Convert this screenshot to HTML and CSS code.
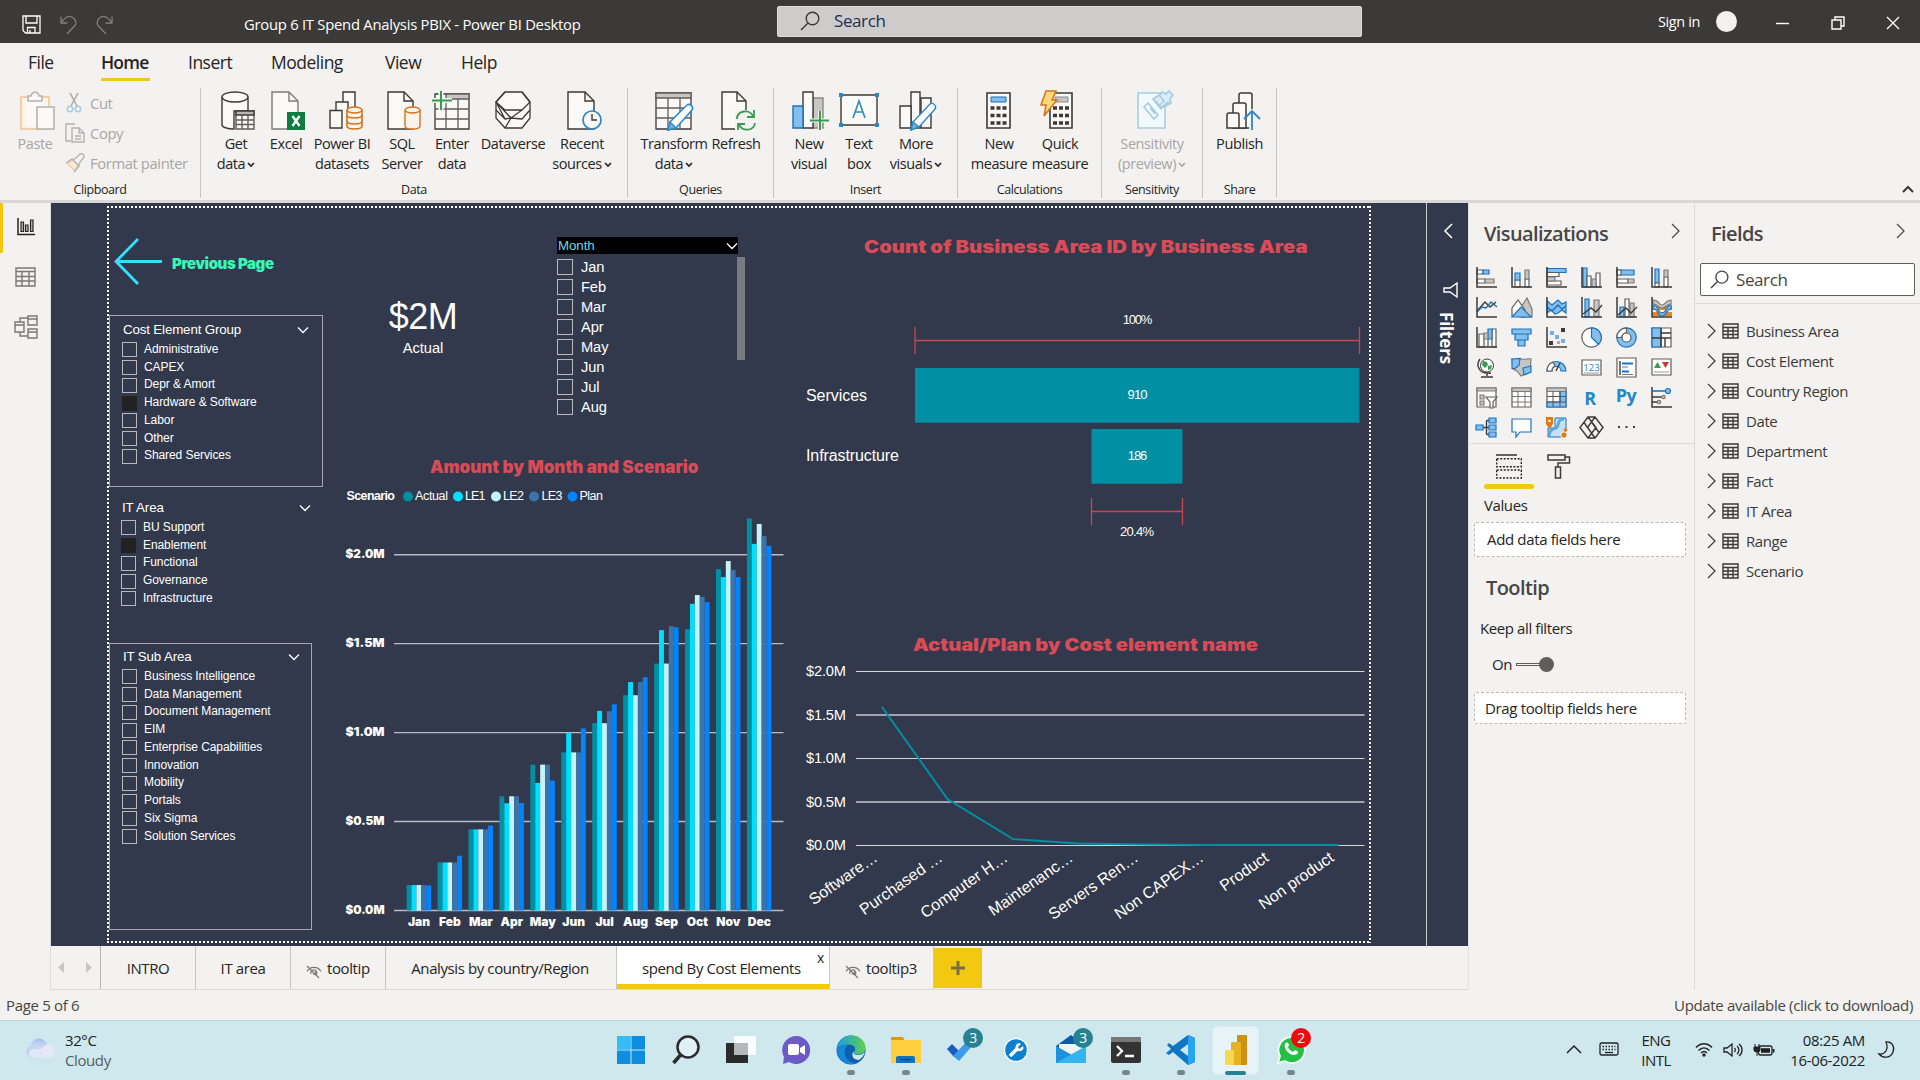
FILE: index.html
```html
<!DOCTYPE html>
<html lang="en">
<head>
<meta charset="utf-8">
<title>Group 6 IT Spend Analysis PBIX - Power BI Desktop</title>
<link rel="stylesheet" href="styles.css">
</head>
<body>
<svg class="defs" width="0" height="0">
  <defs>
    <symbol id="table" viewBox="0 0 17 16"><path d="M1 1h15v14H1zM1 4.500h15M1 8h15M1 11.500h15M6 4v11M11 4v11" fill="none" stroke="#3b3a39" stroke-width="1.400"/></symbol>
    <symbol id="chev-r" viewBox="0 0 9 16"><path d="M1 1l7 7-7 7" fill="none" stroke="currentColor" stroke-width="1.200"/></symbol>
    <symbol id="chev-d" viewBox="0 0 12 8"><path d="M1 1.500l5 5 5-5" fill="none" stroke="currentColor" stroke-width="1.300"/></symbol>
    <symbol id="mini-d" viewBox="0 0 8 6"><path d="M1 1l3 3 3-3" fill="none" stroke="currentColor" stroke-width="1.700"/></symbol>
    <symbol id="eye-off" viewBox="0 0 16 14"><path d="M1 6.500C4 1 12 1 15 6.500M5 9a3 3 0 1 1 5 1M1 1l12 12M7 8.500a1.500 1.500 0 1 0 2-2" fill="none" stroke="#7a7876" stroke-width="1.100"/></symbol>
    <symbol id="glass" viewBox="0 0 20 20"><circle cx="12.500" cy="7.500" r="6.300" fill="none" stroke="currentColor" stroke-width="1.400"/><path d="M8 12l-7 7" stroke="currentColor" stroke-width="1.500"/></symbol>
  </defs>
</svg>

<header class="titlebar">
  <div class="quick">
    <svg width="19" height="19" viewBox="0 0 19 19" fill="none" stroke="#fff" stroke-width="1.300"><path d="M1 1h17v17H3.500L1 15.500zM4 1v7h11V1M5.500 18v-5.500h7.500V18M8 15v3"/></svg>
    <svg width="17" height="20" viewBox="0 0 17 20" fill="none" stroke="#83817f" stroke-width="1.300"><path d="M1 1.500V8h6.500M1 8C5 2 9 .500 12 2c4 2.500 5 6 2.500 9L7 19"/></svg>
    <svg width="17" height="20" viewBox="0 0 17 20" fill="none" stroke="#83817f" stroke-width="1.300"><path d="M16 1.500V8H9.500M16 8C12 2 8 .500 5 2 1 4.500 0 8 2.500 11L10 19"/></svg>
  </div>
  <div class="doc-title">Group 6 IT Spend Analysis PBIX - Power BI Desktop</div>
  <div class="top-search"><svg width="20" height="20"><use href="#glass"/></svg><span>Search</span></div>
  <div class="signin">Sign in</div>
  <div class="avatar"></div>
  <div class="win-btns">
    <svg width="14" height="14" stroke="#fff" stroke-width="1.400"><path d="M0 7.500h13"/></svg>
    <svg width="14" height="14" fill="none" stroke="#fff" stroke-width="1.400"><path d="M1 4h9v9H1zM4 4V1h9v9h-3"/></svg>
    <svg width="14" height="14" stroke="#fff" stroke-width="1.300"><path d="M1 1l12 12M13 1L1 13"/></svg>
  </div>
</header>

<nav class="menu">
  <span class="m-file">File</span><span class="m-home">Home</span><span class="m-insert">Insert</span><span class="m-model">Modeling</span><span class="m-view">View</span><span class="m-help">Help</span>
</nav>

<section class="ribbon">
  <div class="group g-clip">
    <div class="items">
      <div class="cmd w-paste dim">
        <svg class="nudge" width="36" height="40" fill="none" stroke-width="1.600"><path d="M1 6h28v32H1z" fill="#fdf3e2" stroke="#f0cfa8" stroke-width="2"/><path d="M5 10h20v25H5z" fill="#faf9f8"/><path d="M8 10V5h3c1-5 7-5 8 0h3v5z" stroke="#b5b3b1" fill="#faf9f8"/><path d="M17 16h17v22H17z" fill="#faf9f8" stroke="#b5b3b1"/></svg>
        <span>Paste</span>
      </div>
      <div class="clip-list">
        <div><svg width="20" height="20" fill="none" stroke-width="1.500"><path d="M5 0l7 13M13 0L6 13" stroke="#aaa8a6"/><circle cx="5" cy="16" r="2.700" stroke="#a8cbe4"/><circle cx="13" cy="16" r="2.700" stroke="#a8cbe4"/></svg><span>Cut</span></div>
        <div><svg width="20" height="20" fill="none" stroke="#b5b3b1" stroke-width="1.400"><path d="M6 18H1V1h9M7 5h7l5 5v9H7zM14 5v5h5M10 13h6M10 16h6"/></svg><span>Copy</span></div>
        <div><svg width="20" height="20" fill="none" stroke="#b5b3b1" stroke-width="1.400"><path d="M2 10l8 8 3-6-5-5z" fill="#fde9cf" stroke="#f0cfa8"/><path d="M1 10l6-4 7 7-5 6M8 7l3-2 4-4c2-1 5 1 4 3l-4 5-1 3"/></svg><span>Format painter</span></div>
      </div>
    </div>
    <div class="glabel">Clipboard</div>
  </div>

  <div class="group g-data">
    <div class="items">
      <div class="cmd w-get"><svg class="nudge" width="36" height="40" viewBox="0 0 36 40" fill="none" stroke="#3b3a39" stroke-width="1.400"><path d="M1 6v28c0 2 5 4 12 4V20h14V6" fill="#faf9f8"/><ellipse cx="14" cy="6" rx="13" ry="5" fill="#faf9f8"/><path d="M15 20h18v18H15z" fill="#faf9f8" stroke="#605e5c"/><path d="M15 20h18v4H15z" fill="#b9b7b5"/><path d="M15 29h18M15 33.500h18M21 24v14M27 24v14" stroke="#605e5c"/></svg><span>Get<br>data<svg class="mini" width="8" height="6"><use href="#mini-d"/></svg></span></div>
      <div class="cmd w-excel"><svg class="nudge" width="36" height="40" viewBox="0 0 36 40" fill="none"><path d="M1 1h17l9 9v28H1z" fill="#faf9f8" stroke="#7d7b79" stroke-width="1.400"/><path d="M18 1v9h9" stroke="#7d7b79" stroke-width="1.400"/><path d="M16 21h18v18H16z" fill="#107c41"/><path d="M21.500 25l7 10M28.500 25l-7 10" stroke="#fff" stroke-width="2.300"/></svg><span>Excel</span></div>
      <div class="cmd w-pbi"><svg class="nudge2" width="36" height="40" fill="none" stroke="#3b3a39" stroke-width="1.400"><path d="M14 37V1h12v36" fill="#faf9f8"/><path d="M7 37V11h12v26" fill="#faf9f8"/><path d="M1 19.500h12V37H1z" fill="#faf9f8"/><g stroke="#d4731a" fill="#fbf3ea" stroke-width="1.600"><path d="M18 19v16c0 4 15 4 15 0V19"/><ellipse cx="25.500" cy="19" rx="7.500" ry="3"/><path d="M18 24c0 4 15 4 15 0M18 30c0 4 15 4 15 0" fill="none"/></g></svg><span>Power BI<br>datasets</span></div>
      <div class="cmd w-sql"><svg class="nudge" width="36" height="40" viewBox="0 0 36 40" fill="none" stroke="#3b3a39" stroke-width="1.400"><path d="M1 1h16l9 9v28H1z" fill="#faf9f8"/><path d="M17 1v9h9"/><path d="M18 19v16c0 4 15 4 15 0V19" stroke="#d4731a" fill="#fbf3ea"/><ellipse cx="25.500" cy="19" rx="7.500" ry="3" stroke="#d4731a" fill="#fbf3ea"/></svg><span>SQL<br>Server</span></div>
      <div class="cmd w-enter"><svg width="38" height="40" fill="none" stroke="#605e5c" stroke-width="1.300"><path d="M2 3h34v35H2z" fill="#faf9f8" stroke="#3b3a39"/><path d="M13 3h23v5H13z" fill="#c8c6c4"/><path d="M2 18h34M2 28h34M13 8v30M25 8v30"/><path d="M-1 9.500h20M8 -1v20" stroke="#f3f2f1" stroke-width="5"/><path d="M-1 9.500h20M8 0v19" stroke="#3a9b4f" stroke-width="2"/></svg><span>Enter<br>data</span></div>
      <div class="cmd w-dv"><svg width="36" height="40" fill="none" stroke="#3b3a39" stroke-width="1.300"><path d="M10 1h17l8 10v16l-8 10H10L1 27V11z" fill="#faf9f8"/><path d="M10 1L1 11l9 8h17l8-8M35 11L27 1M1 11l15 16 11-8M1 19l9 9 6-1M16 27l11 1 8-9M16 27L10 37M1 11l9 17"/></svg><span>Dataverse</span></div>
      <div class="cmd w-recent"><svg class="nudge" width="36" height="40" viewBox="0 0 36 40" fill="none" stroke="#3b3a39" stroke-width="1.400"><path d="M1 1h17l9 9v28H1z" fill="#faf9f8"/><path d="M18 1v9h9"/><circle cx="25" cy="29" r="9" fill="#faf9f8" stroke="#2b88c8" stroke-width="1.700"/><path d="M25 23v6h5"/></svg><span>Recent<br>sources<svg class="mini" width="8" height="6"><use href="#mini-d"/></svg></span></div>
    </div>
    <div class="glabel">Data</div>
  </div>

  <div class="group g-query">
    <div class="items">
      <div class="cmd w-trans"><svg width="38" height="40" fill="none" stroke="#605e5c" stroke-width="1.300"><path d="M1 2h35v36H1z" fill="#faf9f8" stroke="#3b3a39"/><path d="M1 2h35v5H1z" fill="#c8c6c4"/><path d="M1 17h35M1 27h35M13 7v31M25 7v31"/><path d="M13 39l2-8 17-17c3-2 7 2 5 5L21 37z" fill="#fff" stroke="#2b88c8" stroke-width="1.500"/><path d="M13 39l2-8 6 6z" fill="#71afe5" stroke="#2b88c8"/></svg><span>Transform<br>data<svg class="mini" width="8" height="6"><use href="#mini-d"/></svg></span></div>
      <div class="cmd w-refresh"><svg class="nudge" width="36" height="40" viewBox="0 0 36 40" fill="none" stroke="#3b3a39" stroke-width="1.400"><path d="M1 1h15l9 9v28H1z" fill="#faf9f8"/><path d="M16 1v9h9"/><path d="M14 19h20v21H14z" fill="#f3f2f1" stroke="none"/><path d="M16 28c0-9 13-10 16-3M33 19v7h-7M34 32c-1 8-12 9-16 2M17 39v-6h7" stroke="#3a9b4f" stroke-width="1.800"/></svg><span>Refresh</span></div>
    </div>
    <div class="glabel">Queries</div>
  </div>

  <div class="group g-insert">
    <div class="items">
      <div class="cmd w-nv"><svg class="nudge1" width="38" height="40" fill="none" stroke="#3b3a39" stroke-width="1.400"><path d="M21 7h10v30H21z" fill="#c8c6c4" stroke="#8a8886"/><path d="M11 1h10v36H11z" fill="#faf9f8"/><path d="M1 15h10v22H1z" fill="#83beec" stroke="#1f6fb5"/><path d="M18 29.500h20M28 20v20" stroke="#f3f2f1" stroke-width="4"/><path d="M18 29.500h19M28 20v19" stroke="#3a9b4f" stroke-width="2"/></svg><span>New<br>visual</span></div>
      <div class="cmd w-text"><svg width="40" height="40" fill="none" stroke="#3b3a39" stroke-width="1.400"><path d="M2 4h36v30H2z" fill="#faf9f8"/><path d="M14 27l6-17 6 17M16 21h8" stroke="#2b88c8" stroke-width="1.600"/><path d="M0 2h4v4H0zM36 2h4v4h-4zM0 32h4v4H0zM36 32h4v4h-4z" fill="#2b88c8" stroke="none"/></svg><span>Text<br>box</span></div>
      <div class="cmd w-more"><svg class="nudge1" width="38" height="40" fill="none" stroke="#3b3a39" stroke-width="1.400"><path d="M22 7h10v30H22z" fill="#faf9f8"/><path d="M12 1h9v36h-9z" fill="#faf9f8"/><path d="M1 15h11v22H1z" fill="#faf9f8"/><path d="M12 39l2-8 17-18c3-2 7 2 5 5L20 36z" fill="#fff" stroke="#2b88c8"/><path d="M12 39l2-8 6 5z" fill="#71afe5" stroke="#2b88c8"/></svg><span>More<br>visuals<svg class="mini" width="8" height="6"><use href="#mini-d"/></svg></span></div>
    </div>
    <div class="glabel">Insert</div>
  </div>

  <div class="group g-calc">
    <div class="items">
      <div class="cmd w-nm"><svg width="28" height="40" fill="none"><path d="M2 2h23v35H2z" fill="#faf9f8" stroke="#3b3a39" stroke-width="1.600"/><path d="M6 6h15v5H6z" fill="#83beec" stroke="#1f6fb5"/><path d="M5.500 17h16M5.500 24.500h16M5.500 32h16" stroke="#3b3a39" stroke-width="3.600" stroke-dasharray="4 2"/></svg><span>New<br>measure</span></div>
      <div class="cmd w-qm"><svg class="nudge-l" width="36" height="40" fill="none"><path d="M10 2h22v35H10z" fill="#faf9f8" stroke="#3b3a39" stroke-width="1.600"/><path d="M15 6h13v5H15z" fill="#c8c6c4" stroke="#8a8886"/><path d="M13 17h16M13 24.500h16M13 32h16" stroke="#3b3a39" stroke-width="3.600" stroke-dasharray="4 2"/><path d="M6 0h10l-4 9h5L4 25l2-11H1z" fill="#ffd67a" stroke="#d4731a" stroke-width="1.500"/></svg><span>Quick<br>measure</span></div>
    </div>
    <div class="glabel">Calculations</div>
  </div>

  <div class="group g-sens">
    <div class="items">
      <div class="cmd w-sens dim"><svg class="nudge" width="36" height="40" fill="none" stroke="#a6cde4" stroke-width="1.600"><path d="M1 2h27v35H1z" fill="#f3f8fb"/><path d="M11 12l10 12-4 4L7 16zM13 17l5 6"/><path d="M16 8l6-4 5 6-5 5zM22 5l3-4 4 2 3-3 4 4-3 4 1 4-5 3" fill="#dcecf5"/><path d="M18 10l6 7 8-6" stroke-width="2.500"/></svg><span>Sensitivity<br>(preview)<svg class="mini" width="8" height="6"><use href="#mini-d"/></svg></span></div>
    </div>
    <div class="glabel">Sensitivity</div>
  </div>

  <div class="group g-share">
    <div class="items">
      <div class="cmd w-pub"><svg class="nudge" width="34" height="40" fill="none" stroke="#3b3a39" stroke-width="1.500"><path d="M13 37V4q0-2 2-2h9q2 0 2 2v33z" fill="#faf9f8"/><path d="M7 37V14q0-2 2-2h9q2 0 2 2v23z" fill="#faf9f8"/><path d="M1 37V24q0-2 2-2h8q2 0 2 2v13z" fill="#faf9f8"/><path d="M26 18v22" stroke="#f3f2f1" stroke-width="6"/><path d="M26 39V20M18 28l8-8 8 8" stroke="#2b88c8" stroke-width="1.800"/></svg><span>Publish</span></div>
    </div>
    <div class="glabel">Share</div>
  </div>
  <svg class="collapse" width="12" height="8" fill="none" stroke="#3b3a39" stroke-width="2"><path d="M1 7l5-5 5 5"/></svg>
</section>

<main class="workspace">
  <aside class="rail">
    <div class="rail-item on"><svg width="18" height="18" fill="none" stroke="#252423" stroke-width="1.500"><path d="M1 0v16.500h17"/><path d="M4 4h2.500v9.500H4zM8.500 7H11v6.500H8.500zM13.500 2H16v11.500h-2.500z" fill="#bbb" stroke-width="1.200"/></svg></div>
    <div class="rail-item"><svg width="21" height="20" fill="none" stroke="#7a7876" stroke-width="1.400"><path d="M1 1h19v18H1zM1 4.500h19M1 9.500h19M1 14h19M7 4v15M14 4v15"/></svg></div>
    <div class="rail-item"><svg width="24" height="24" fill="none" stroke="#7a7876" stroke-width="1.400"><path d="M14 1h9v9h-9zM14 4h9M1 7h9v10H1zM1 10h9M14 14h9v9h-9zM14 17h9M6 7V3h8M6 17v4h8"/></svg></div>
  </aside>

  <div class="center">
    <div class="stage">
      <div class="canvas-area">
        <div class="report">
          <div class="prev">
            <svg width="48" height="48" fill="none" stroke="#32e0ff" stroke-width="2.800"><path d="M24 1L2 23.500 24 46M2 23.500h46"/></svg>
            <svg width="104" height="22"><text class="black prev-t" x="0" y="18" textLength="102">Previous Page</text></svg>
          </div>

          <div class="slicer s1 boxed">
            <div class="s-head"><span>Cost Element Group</span><svg width="12" height="8"><use href="#chev-d"/></svg></div>
            <ul><li>Administrative</li><li>CAPEX</li><li>Depr &amp; Amort</li><li class="on">Hardware &amp; Software</li><li>Labor</li><li>Other</li><li>Shared Services</li></ul>
          </div>
          <div class="slicer s2">
            <div class="s-head"><span>IT Area</span><svg width="12" height="8"><use href="#chev-d"/></svg></div>
            <ul><li>BU Support</li><li class="on">Enablement</li><li>Functional</li><li>Governance</li><li>Infrastructure</li></ul>
          </div>
          <div class="slicer s3 boxed">
            <div class="s-head"><span>IT Sub Area</span><svg width="12" height="8"><use href="#chev-d"/></svg></div>
            <ul><li>Business Intelligence</li><li>Data Management</li><li>Document Management</li><li>EIM</li><li>Enterprise Capabilities</li><li>Innovation</li><li>Mobility</li><li>Portals</li><li>Six Sigma</li><li>Solution Services</li></ul>
          </div>

          <div class="card"><div class="big">$2M</div><div class="cap">Actual</div></div>

          <div class="month">
            <div class="mo-head"><span>Month</span><svg width="12" height="8"><use href="#chev-d"/></svg></div>
            <div class="mo-body">
              <ul><li>Jan</li><li>Feb</li><li>Mar</li><li>Apr</li><li>May</li><li>Jun</li><li>Jul</li><li>Aug</li></ul>
              <div class="scroll"></div>
            </div>
          </div>

          <svg class="viz bars" viewBox="340 450 450 485" width="450" height="485">
            <text class="black red" x="430" y="473" textLength="268.500" lengthAdjust="spacingAndGlyphs">Amount by Month and Scenario</text>
            <g class="legend">
              <text x="346.500" y="500" textLength="48.500" class="b">Scenario</text>
              <circle cx="408" cy="496.500" r="5" fill="#018fa4"/><text x="415" y="500" textLength="33">Actual</text>
              <circle cx="458" cy="496.500" r="5" fill="#00dfff"/><text x="465" y="500" textLength="20.500">LE1</text>
              <circle cx="496" cy="496.500" r="5" fill="#c3f3fb"/><text x="503" y="500" textLength="21">LE2</text>
              <circle cx="534" cy="496.500" r="5" fill="#3c73ab"/><text x="541.500" y="500" textLength="21">LE3</text>
              <circle cx="572.500" cy="496.500" r="5" fill="#0084ff"/><text x="579.500" y="500" textLength="23.500">Plan</text>
            </g>
            <g id="bar-plot"></g>
          </svg>

          <svg class="viz funnel" viewBox="800 230 565 315" width="565" height="315">
            <text class="black red" x="864" y="253" textLength="443.500" lengthAdjust="spacingAndGlyphs">Count of Business Area ID by Business Area</text>
            <g fill="none" stroke="#c9484f" stroke-width="1.300"><path d="M915 327v27M1359.500 327v27M915 340.500h444.500M1091.500 498v27M1182.500 498v27M1091.500 511.500h91"/></g>
            <path d="M915 368h444.500v54.700H915zM1091.500 429h91v54.800h-91z" fill="#018fa4"/>
            <g class="num"><text x="1137.500" y="324" textLength="29.500">100%</text><text x="1137.500" y="399" textLength="20">910</text><text x="1137.500" y="460" textLength="19.500">186</text><text x="1137" y="536" textLength="34">20.4%</text></g>
            <g class="cat"><text x="806" y="400.500" textLength="61">Services</text><text x="806" y="460.500" textLength="93">Infrastructure</text></g>
          </svg>

          <svg class="viz line" viewBox="800 630 570 300" width="570" height="300">
            <text class="black red" x="913" y="651" textLength="345" lengthAdjust="spacingAndGlyphs">Actual/Plan by Cost element name</text>
            <g stroke="#d3d5da"><path d="M856 671.500h508.500M856 758.500h508.500M856 845.500h508.500" stroke-width="1.200"/><path d="M856 715h508.500M856 802h508.500" stroke="#a0a4ae" stroke-width="2"/></g>
            <g class="axis"><text x="806" y="676" textLength="40">$2.0M</text><text x="806" y="719.500" textLength="40">$1.5M</text><text x="806" y="763" textLength="40">$1.0M</text><text x="806" y="806.500" textLength="40">$0.5M</text><text x="806" y="850" textLength="40">$0.0M</text></g>
            <path d="M882 707l65.500 92 65.500 40 65 4.500 65 1 65 .5h130.500" fill="none" stroke="#018fa4" stroke-width="2"/>
            <g class="tilt" id="tilt"></g>
          </svg>
        </div>
      </div>
      <aside class="filters">
        <svg class="f-chev" width="9" height="16" fill="none" stroke="#fff" stroke-width="1.500"><path d="M8 1L1 8l7 7"/></svg>
        <svg class="f-fun" width="16" height="16" fill="none" stroke="#fff" stroke-width="1.400"><path d="M14 1v14L7 10H1V6h6z"/></svg>
        <span>Filters</span>
      </aside>
    </div>
    <div class="tabs">
      <div class="t-nav"><svg width="6" height="11"><path d="M6 0v11L0 5.500z" fill="#c8c6c4"/></svg><svg width="6" height="11"><path d="M0 0v11l6-5.500z" fill="#c8c6c4"/></svg></div>
      <div class="tab t1">INTRO</div>
      <div class="tab t2">IT area</div>
      <div class="tab t3"><svg width="16" height="14"><use href="#eye-off"/></svg>tooltip</div>
      <div class="tab t4">Analysis by country/Region</div>
      <div class="tab t5">spend By Cost Elements<span class="close">x</span></div>
      <div class="tab t6"><svg width="16" height="14"><use href="#eye-off"/></svg>tooltip3</div>
      <div class="plus"><svg width="14" height="14" stroke="#7a6f45" stroke-width="3"><path d="M0 7h14M7 0v14"/></svg></div>
    </div>
  </div>

  <aside class="vis-pane">
    <div class="pane-head"><h2 class="vt">Visualizations</h2><svg width="9" height="16"><use href="#chev-r"/></svg></div>
    <div class="vgrid">
      <svg viewBox="0 0 21 21"><path d="M1 3h6v4H1z" class="w"/><path d="M7 3h6v4H7z" class="u"/><path d="M1 12h8v4H1z" class="w"/><path d="M9 12h9v4H9z" class="g"/><path class="ax" d="M1 0v20h20"/></svg>
      <svg viewBox="0 0 21 21"><path d="M4 13h5v7H4z" class="w"/><path d="M4 6h5v7H4z" class="u"/><path d="M14 12h4v8h-4z" class="w"/><path d="M14 3h4v9h-4z" class="g"/><path class="ax" d="M1 0v20h20"/></svg>
      <svg viewBox="0 0 21 21"><path d="M1 1.500h19v4H1z" class="u"/><path d="M1 5.500h12v4H1zM1 14h14v4H1z" class="w"/><path d="M1 10h8v4H1z" class="g"/><path class="ax" d="M1 0v20h20"/></svg>
      <svg viewBox="0 0 21 21"><path d="M2 1h4v19H2z" class="u"/><path d="M6 9h4v11H6zM15 6h4v14h-4z" class="w"/><path d="M11 12h4v8h-4z" class="g"/><path class="ax" d="M1 0v20h20"/></svg>
      <svg viewBox="0 0 21 21"><path d="M1 3h17v5H1z" class="u"/><path d="M1 3h4v5H1zM1 12h11v4H1z" class="w"/><path d="M12 12h6v4h-6z" class="g"/><path class="ax" d="M1 0v20h20"/></svg>
      <svg viewBox="0 0 21 21"><path d="M4 2h4v14H4z" class="u"/><path d="M4 16h4v4H4zM13 10h4v10h-4z" class="w"/><path d="M13 3h4v7h-4z" class="g"/><path class="ax" d="M1 0v20h20"/></svg>

      <svg viewBox="0 0 21 21"><path d="M1 14L9 5l5 5 6-5" class="n"/><path d="M1 15l5-5 4 1 5-6 6 5" class="n bl"/><path class="ax" d="M1 0v20h20"/></svg>
      <svg viewBox="0 0 21 21"><path d="M10 10l6-9 5 11v8H10z" class="g"/><path d="M1 19V11l6-8 7 10v7z" class="w"/><path d="M1 20l9-10 10 10z" class="u"/></svg>
      <svg viewBox="0 0 21 21"><path d="M1 4l5 4 6-5 4 4 4-2v11l-4-3-4 3-3 1-4-4-4 3z" class="u"/><path d="M1 10l5 4 6-6 4 4 4-3" class="n bl"/><path class="ax" d="M1 0v20h20"/></svg>
      <svg viewBox="0 0 21 21"><path d="M4 2h4v18H4z" class="u"/><path d="M13 3h5v17h-5z" class="g"/><path d="M2 17l8-6 5 4 6-7" class="n"/><path class="ax" d="M1 0v20h20"/></svg>
      <svg viewBox="0 0 21 21"><path d="M4 10h4v10H4z" class="u"/><path d="M9 2h4v18H9z" class="w"/><path d="M14 6h4v14h-4z" class="g"/><path d="M2 18l8-7 5 5 6-6" class="n"/><path class="ax" d="M1 0v20h20"/></svg>
      <svg viewBox="0 0 21 21"><path d="M1 9h20v4H1zM1 15h20v4H1z" fill="#e8871e"/><path d="M2 3c7 0 5 5 9 5s3-5 9-5v4c-5 0-4 4-9 4S8 7 2 7z" class="g"/><path d="M2 8c6 0 4 8 9 8s4-8 9-8v4c-5 0-4 7-9 7S8 12 2 12z" class="u"/><path class="ax" d="M1 0v20h20"/></svg>

      <svg viewBox="0 0 21 21"><path d="M3 7h5v13H3zM8 8h4v12M16 2h4v18h-4z" class="w"/><path d="M12 2h4v10h-4z" class="u"/><path d="M8 6h4v6H8z" class="g"/><path class="ax" d="M1 0v20h20"/></svg>
      <svg viewBox="0 0 21 21"><path d="M1 2h19v5H1zM4 7h13v6H4zM7 13h7v6H7z" class="u"/></svg>
      <svg viewBox="0 0 21 21"><path d="M4 4h4v4H4zM9 8h4v4H9zM15 12h4v4h-4z" fill="#71afe5"/><path d="M15 1h4v4h-4zM3 14h4v4H3z" fill="#3b3a39"/><path d="M11 14h3v3h-3z" fill="#aaa"/><path class="ax" d="M1 0v20h20"/></svg>
      <svg viewBox="0 0 21 21"><circle cx="10.500" cy="10.500" r="9.700" class="w"/><path d="M10.500.800a9.700 9.700 0 0 1 7 16.500l-7-6.800z" class="u"/></svg>
      <svg viewBox="0 0 21 21"><circle cx="10.500" cy="10.500" r="9.700" class="u"/><path d="M.800 10.500A9.700 9.700 0 0 1 10.500.800v5a5 5 0 0 0-5 4.700z" class="w"/><circle cx="10.500" cy="10.500" r="4.500" class="w"/></svg>
      <svg viewBox="0 0 21 21"><path d="M1 1h19v19H1z" class="w"/><path d="M1 1h9v19H1z" class="u"/><path d="M1 11h19M14 11v9M10 6h10M10 1v19" class="n"/></svg>

      <svg viewBox="0 0 21 21"><circle cx="11" cy="8.500" r="6.500" fill="#fff" stroke="#3b3a39"/><path d="M7 4l4 1 1 3-3 3-3-3zM12 9l4-1-1 4-3 1z" fill="#3a9b4f"/><path d="M4 2c-5 7 0 14 7 14h4M11 16v3M5 20h12" class="n"/></svg>
      <svg viewBox="0 0 21 21"><path d="M1 2c4 2 6-1 10 0s6-1 9 0l-1 12-9 5-4-5-4-2z" class="g"/><path d="M1 2l8-.500-1 7-4 3H1zM12 11l8-2v6l-7 3z" class="u"/></svg>
      <svg viewBox="0 0 21 21"><path d="M1 14a9.500 9.500 0 0 1 19 0h-5a4.500 4.500 0 0 0-9 0z" class="u"/><path d="M1 14a9.500 9.500 0 0 1 6-9l2 4a5 5 0 0 0-3 5z" class="w"/><path d="M10 14l4-8" class="n"/></svg>
      <svg viewBox="0 0 21 21"><path d="M1 3h19v15H1z" class="w"/><path d="M3 16h15" stroke="#999"/><text x="10.500" y="14" class="i123">123</text></svg>
      <svg viewBox="0 0 21 21"><path d="M1 1h19v19H1z" class="w"/><path d="M4 4v14" class="n"/><path d="M6 6.500h11M6 14.500h7" stroke="#1a73c0" stroke-width="2.200"/><path d="M6 10h6M6 17.500h11" stroke="#777"/></svg>
      <svg viewBox="0 0 21 21"><path d="M1 2h19v16H1z" class="w"/><path d="M3 11l3.500-6L10 11z" fill="#3a9b4f"/><path d="M11 5h7l-3.500 6z" fill="#d13438"/><path d="M3 15h15" stroke="#999"/></svg>

      <svg viewBox="0 0 21 21"><path d="M1 1h19v19H1z" class="w"/><path d="M1 1h19v3H1z" class="g"/><path d="M4 8h4v4H4zM4 14h4v4H4z" class="g"/><path d="M10 10h11l-4 5v6h-3v-6z" class="w"/></svg>
      <svg viewBox="0 0 21 21"><path d="M1 1h19v19H1z" class="w"/><path d="M1 1h19v3.500H1z" class="g"/><path d="M1 9.500h19M1 15h19M7 4v16M14 4v16" stroke="#777"/></svg>
      <svg viewBox="0 0 21 21"><path d="M1 1h19v19H1z" class="w"/><path d="M14 4h6v16H1v-5h13z" class="u"/><path d="M1 1h19v3.500H1z" class="g"/><path d="M1 9.500h19M1 15h19M7 4v16M14 4v16" stroke="#555"/></svg>
      <svg viewBox="0 0 21 21"><text x="9" y="17.500" class="ir">R</text></svg>
      <svg viewBox="0 0 21 21"><text x="10" y="15" class="ir">Py</text></svg>
      <svg viewBox="0 0 21 21"><path class="ax" d="M1 0v20h20"/><path d="M1 4h14" stroke="#1a73c0" stroke-width="1.600"/><circle cx="17" cy="4" r="2.500" class="u"/><path d="M1 10h10M1 15h5" class="n"/><circle cx="12.500" cy="10" r="1.700" class="g"/><circle cx="8" cy="15" r="1.700" class="g"/></svg>

      <svg viewBox="0 0 21 21"><path d="M7 10.500h6M10.500 3.500v14M10.500 3.500H13M10.500 17.500H13" class="n"/><path d="M0 8h7v5H0zM13 1h7v5h-7zM13 8h7v5h-7zM13 15h7v5h-7z" class="u"/></svg>
      <svg viewBox="0 0 21 21"><path d="M1 2h19v13H9l-4 5v-5H1z" class="w bl"/></svg>
      <svg viewBox="0 0 21 21"><path d="M9 1h11v12l-3 7H2v-9h7z" fill="#c3e0f5" stroke="#1a73c0"/><path d="M18 2c-8 0-4 7-8 9s-6 1-7 8" stroke="#5ba7e0" stroke-width="3" fill="none"/><path d="M0 0h7v7l-3.500 5L0 7z" fill="#e07a10"/><circle cx="3.500" cy="4" r="1.300" fill="#fff"/><circle cx="18" cy="18" r="3.200" fill="#e07a10" stroke="#fff"/><circle cx="19.500" cy="13" r="1.800" fill="#e07a10"/></svg>
      <svg viewBox="0 0 21 21"><path d="M7 0h7l8 10.500L14 21H7L-1 10.500zM7 0l8 10.500L7 21M14 0L6.500 10.500 14 21M10.500 5L18 15.500M10.500 16L3 5.500" class="n"/></svg>
      <svg viewBox="0 0 21 21"><path d="M2 9h2v2H2zM9.500 9h2v2h-2zM17 9h2v2h-2z" fill="#3b3a39"/></svg>
    </div>
    <div class="well-tabs">
      <svg width="26" height="25" fill="none" stroke="#252423" stroke-width="1.400"><path d="M0 1h21"/><path d="M.700 4.700h24.600v8H.700zM.700 16h24.600v8H.700z" stroke-dasharray="2 1.500"/></svg>
      <svg width="24" height="25" fill="none" stroke="#3b3a39" stroke-width="1.500"><path d="M1 1h17v5H1zM18 3h4.500v6H11v4M8.500 13h5v11h-5z"/></svg>
    </div>
    <div class="underline"></div>
    <div class="lbl-values">Values</div>
    <div class="drop d1">Add data fields here</div>
    <h2 class="tt">Tooltip</h2>
    <div class="keep">Keep all filters</div>
    <div class="toggle"><span>On</span><i></i><b></b></div>
    <div class="drop d2">Drag tooltip fields here</div>
  </aside>

  <aside class="fields-pane">
    <div class="pane-head"><h2>Fields</h2><svg width="9" height="16"><use href="#chev-r"/></svg></div>
    <div class="f-search"><svg width="19" height="19"><use href="#glass"/></svg><span>Search</span></div>
    <ul class="f-list">
      <li><svg width="9" height="16"><use href="#chev-r"/></svg><svg width="17" height="16"><use href="#table"/></svg>Business Area</li>
      <li><svg width="9" height="16"><use href="#chev-r"/></svg><svg width="17" height="16"><use href="#table"/></svg>Cost Element</li>
      <li><svg width="9" height="16"><use href="#chev-r"/></svg><svg width="17" height="16"><use href="#table"/></svg>Country Region</li>
      <li><svg width="9" height="16"><use href="#chev-r"/></svg><svg width="17" height="16"><use href="#table"/></svg>Date</li>
      <li><svg width="9" height="16"><use href="#chev-r"/></svg><svg width="17" height="16"><use href="#table"/></svg>Department</li>
      <li><svg width="9" height="16"><use href="#chev-r"/></svg><svg width="17" height="16"><use href="#table"/></svg>Fact</li>
      <li><svg width="9" height="16"><use href="#chev-r"/></svg><svg width="17" height="16"><use href="#table"/></svg>IT Area</li>
      <li><svg width="9" height="16"><use href="#chev-r"/></svg><svg width="17" height="16"><use href="#table"/></svg>Range</li>
      <li><svg width="9" height="16"><use href="#chev-r"/></svg><svg width="17" height="16"><use href="#table"/></svg>Scenario</li>
    </ul>
  </aside>
</main>

<footer class="status"><span class="pg">Page 5 of 6</span><span class="upd">Update available (click to download)</span></footer>

<div class="taskbar">
  <div class="weather">
    <svg width="32" height="22"><defs><linearGradient id="cl" x1="0" y1="0" x2="0" y2="1"><stop offset="0" stop-color="#a9c0ee"/><stop offset="1" stop-color="#eaf0fa"/></linearGradient></defs><circle cx="14" cy="9" r="8.500" fill="url(#cl)"/><circle cx="7" cy="14" r="6" fill="#c6d4f0"/><rect x="4" y="11" width="26" height="9" rx="4.500" fill="#dfe7f5"/><circle cx="23" cy="13" r="6.500" fill="#e3e9f6"/></svg>
    <div><div class="temp">32°C</div><div class="sky">Cloudy</div></div>
  </div>
  <div class="apps">
    <div class="app"><svg width="30" height="30"><path d="M1 1h13.500v13.500H1zM15.500 1H29v13.500H15.500zM1 15.500h13.500V29H1zM15.500 15.500H29V29H15.500z" fill="#0f8de0"/><path d="M1 1h13.500v13.500H1z" fill="#35bdf5"/></svg></div>
    <div class="app"><svg width="30" height="30" fill="none"><circle cx="17" cy="12" r="10.500" stroke="#2b2b2b" stroke-width="2.500" fill="#dff1f6"/><path d="M9.500 20l-7 8" stroke="#2b2b2b" stroke-width="3.500"/></svg></div>
    <div class="app"><svg width="30" height="30"><path d="M0 8h22v20H0z" fill="#2b2b2b"/><path d="M8 1h22v19H8z" fill="#fff" opacity=".85"/><path d="M8 8h14v12H8z" fill="#b5b8ba"/></svg></div>
    <div class="app"><svg width="30" height="30"><path d="M15 1a14 14 0 1 1-7 26l-6 2 1-7A14 14 0 0 1 15 1z" fill="#6a5bc7"/><rect x="7" y="9" width="11" height="11" rx="2" fill="#fff"/><path d="M19 13l5-3v10l-5-3z" fill="#fff"/></svg></div>
    <div class="app dot"><svg width="32" height="32"><defs><linearGradient id="ed" x1="0" y1="0" x2="1" y2="0"><stop offset="0" stop-color="#1b9de2"/><stop offset="1" stop-color="#5fd04c"/></linearGradient></defs><circle cx="16" cy="16" r="14.500" fill="#0f5fb0"/><path d="M2 14C4 5 10 1.500 16 1.500c9 0 14.500 6 14.500 12 0 5-4 7-8 7-3 0-4-1-3-3 2-4-1-7-6-7-5 0-9 2-11.500 3.500z" fill="url(#ed)"/><path d="M2 15c3-4 8-5 11-4-4 3-5 10 0 15 2 2 5 3 8 3-9 4-20-3-19-14z" fill="#1788d8"/><path d="M19 17c-1 3 1 4 4 4 3 0 5-1 7-3-1 3-3 6-6 8-5 0-9-4-5-9z" fill="#cfe8ee"/></svg></div>
    <div class="app dot"><svg width="32" height="30"><path d="M1 2h12l2 4h-14z" fill="#d99a0b"/><path d="M1 5h30v23H1z" fill="#ffce3e"/><path d="M6 28v-5q0-2 2-2h15q2 0 2 2v5z" fill="#0e74c4"/><path d="M10 24.500h11" stroke="#084f8c" stroke-width="1.500"/></svg></div>
    <div class="app"><svg width="32" height="30"><path d="M2 14l5-5 7 7-5 6z" fill="#1b5bbf"/><path d="M8 21L23 5l5 5-14 16z" fill="#3f9ae8"/></svg><em>3</em></div>
    <div class="app"><svg width="30" height="30"><circle cx="15" cy="15" r="12" fill="#fff"/><circle cx="15" cy="15" r="10.800" fill="#0b7fd0"/><path d="M9 21l7-7" stroke="#fff" stroke-width="3.500"/><path d="M15 15c-2-5 2-8 5-6l-3 3 1 2 4-3c2 4-3 7-7 4z" fill="#fff"/></svg></div>
    <div class="app"><svg width="32" height="32"><path d="M1 12L16 1l15 11v17H1z" fill="#0a5ba8"/><path d="M4 10h24v8L16 24 4 18z" fill="#eef3f8"/><path d="M1 12l30 17H1z" fill="#1c91e0"/><path d="M31 12L1 29h30z" fill="#35b5f0"/></svg><em>3</em></div>
    <div class="app dot"><svg width="30" height="26"><rect width="30" height="26" rx="2" y="0" fill="#333"/><path d="M0 0h30v5H0z" fill="#777"/><path d="M6 9l5 5-5 5M14 19h9" stroke="#fff" stroke-width="2.300" fill="none"/></svg></div>
    <div class="app dot"><svg width="32" height="32"><path d="M23 1l7 3v24l-7 3L8 18l-4 3-3-2 5-4-4-4 2-2 4 3z" fill="#0f76c6"/><path d="M23 1l7 3v24l-7 3z" fill="#25a4f0"/><path d="M23 10v12l-8-6z" fill="#cfe8ee"/></svg></div>
    <div class="app active"><svg width="24" height="30"><rect x="13" y="0" width="10" height="30" rx="1" fill="#cf9210"/><rect x="7" y="7" width="10" height="23" rx="1" fill="#e8b321"/><rect x="1" y="15" width="9" height="15" rx="1" fill="#f6d751"/></svg></div>
    <div class="app dot"><svg width="28" height="30"><path d="M14 2a13 13 0 1 1-6 24l-7 2 2-7A13 13 0 0 1 14 2z" fill="#25c043" stroke="#f3fbfc" stroke-width="1.800"/><path d="M8 9c1-2 3-2 4 1l-1 2c1 3 3 4 5 5l2-2c3 1 4 3 2 4-6 4-14-5-12-10z" fill="#fff"/></svg><em class="r">2</em></div>
  </div>
  <div class="tray">
    <svg width="16" height="9" fill="none" stroke="#222" stroke-width="1.500"><path d="M1 8l7-7 7 7"/></svg>
    <svg width="20" height="15" fill="none" stroke="#222" stroke-width="1.300"><rect x="1" y="1" width="18" height="12" rx="1.500"/><path d="M3.500 4.500h13M3.500 7.500h13" stroke-dasharray="1.500 1.500"/><path d="M6 10.500h8"/></svg>
    <div class="lang">ENG<br>INTL</div>
    <svg width="18" height="15" fill="none" stroke="#222" stroke-width="1.400"><path d="M1 5.500c4.500-5 11.500-5 16 0M3.500 8.500c3.500-3.500 7.500-3.500 11 0M6 11c2-2 4-2 6 0"/><circle cx="9" cy="13" r="1" fill="#222"/></svg>
    <svg width="20" height="16" fill="none" stroke="#222" stroke-width="1.300"><path d="M1 6h3l5-4v12l-5-4H1zM11.500 6c1 1 1 3 0 4M14 4c2.500 2 2.500 6 0 8M16 2c4 3 4 9 0 12"/></svg>
    <svg width="22" height="16"><rect x="5.500" y="4" width="13.500" height="9" rx="2" fill="none" stroke="#222" stroke-width="1.300"/><path d="M8 6.200h9v4.600H8z" fill="#222"/><path d="M19.500 7h2v3.500h-2z" fill="#222"/><path d="M2 2v3M6 2v3M1 5h6v3q0 2-3 2t-3-2zM4 10v4" fill="#222" stroke="#222"/></svg>
    <div class="clock">08:25 AM<br>16-06-2022</div>
    <svg width="17" height="18" fill="none" stroke="#222" stroke-width="1.300"><path d="M8 1c6-1 9 5 7 10-2 6-10 7-14 2 6 1 10-5 7-12z"/></svg>
  </div>
</div>
<script src="charts.js"></script>
</body>
</html>
```
FILE: charts.js
```js
const NS = 'http://www.w3.org/2000/svg';
function add(parent, name, attrs, text) {
  const el = document.createElementNS(NS, name);
  for (const k in attrs) el.setAttribute(k, attrs[k]);
  if (text) el.textContent = text;
  parent.appendChild(el);
}

// Clustered columns: amount in $M for Actual, LE1, LE2, LE3 and Plan
const colors = ['#018fa4', '#00dfff', '#c3f3fb', '#3c73ab', '#0084ff'];
const months = {
  Jan: [0.143, 0.143, 0.143, 0.143, 0.141], Feb: [0.27, 0.27, 0.27, 0.27, 0.308],
  Mar: [0.456, 0.456, 0.456, 0.456, 0.477], Apr: [0.642, 0.603, 0.642, 0.642, 0.604],
  May: [0.82, 0.717, 0.82, 0.82, 0.73], Jun: [0.889, 0.999, 0.889, 0.889, 1.024],
  Jul: [1.053, 1.122, 1.053, 1.12, 1.159], Aug: [1.21, 1.284, 1.21, 1.284, 1.311],
  Sep: [1.388, 1.576, 1.388, 1.598, 1.592], Oct: [1.581, 1.724, 1.773, 1.763, 1.733],
  Nov: [1.919, 1.874, 1.964, 1.915, 1.874], Dec: [2.204, 2.061, 2.173, 2.104, 2.05]
};
const plot = document.getElementById('bar-plot');
const base = 910.5, unit = 177.9;
[2, 1.5, 1, 0.5, 0].forEach(v => {
  const y = base - v * unit;
  add(plot, 'path', { d: `M394 ${y}h389.5`, stroke: '#b9bcc4', 'stroke-width': 1.4 });
  add(plot, 'text', { x: 345.5, y: y + 3.5, class: 'black tick', textLength: 39, lengthAdjust: 'spacingAndGlyphs' }, `$${v.toFixed(1)}M`);
});
Object.entries(months).forEach(([name, vals], i) => {
  const x = 406.6 + i * 30.94;
  vals.forEach((v, j) => add(plot, 'rect', {
    x: x + j * 4.9, y: base - v * unit, width: 4.9, height: v * unit, fill: colors[j]
  }));
  add(plot, 'text', { x: x + 12.4, y: 926, class: 'black tick mid' }, name);
});

// Tilted category labels under the line chart
const tilt = document.getElementById('tilt');
['Software…', 'Purchased …', 'Computer H…', 'Maintenanc…', 'Servers Ren…', 'Non CAPEX…', 'Product', 'Non product']
  .forEach((t, i) => add(tilt, 'text', { transform: `translate(${878.5 + i * 65.2} 860) rotate(-35)` }, t));
```
FILE: styles.css
```css
* { box-sizing: border-box; }
body { margin: 0; width: 1920px; height: 1080px; overflow: hidden; background: #f3f2f1; color: #252423; font: 15px/20px "Open Sans", "Noto Sans", sans-serif; letter-spacing: -0.4px; display: flex; flex-direction: column; }
svg { display: block; flex: none; overflow: visible; }
.defs { position: absolute; }
ul { list-style: none; margin: 0; padding: 0; }
h2 { margin: 0; font-size: 20px; line-height: 26px; font-weight: 600; color: #484644; letter-spacing: -0.6px; }

.titlebar { height: 43px; flex: none; background: #3b3a38; color: #fff; display: flex; align-items: center; }
.quick { display: flex; gap: 19px; padding-left: 22px; width: 244px; padding-top: 6px; }
.doc-title { width: 533px; padding-top: 4px; font-size: 14.800px; letter-spacing: -.25px; }
.top-search { width: 585px; height: 31px; background: #cdccca; border: 1px solid #dddcda; border-radius: 2px; display: flex; align-items: center; gap: 14px; padding-left: 22px; font-size: 17px; color: #1d2c55; margin-top: -1px; }
.top-search svg { color: #3b3a38; }
.signin { margin-left: 296px; width: 58px; font-size: 14.500px; }
.avatar { width: 21px; height: 21px; border-radius: 50%; background: #f3f2f1; }
.win-btns { display: flex; gap: 41px; padding-left: 39px; padding-top: 3px; }

.menu { height: 45px; flex: none; display: flex; padding: 7px 0 0 28px; font-size: 17.500px; line-height: 24px; letter-spacing: -0.5px; }
.menu span { white-space: nowrap; }
.m-file { width: 73px; }
.m-home { font-weight: 600; border-bottom: 3px solid #f2c811; width: 49px; height: 31px; letter-spacing: -.8px; }
.m-insert { margin-left: 38px; width: 83px; }
.m-model { width: 114px; }
.m-view { width: 76px; }

.ribbon { height: 115px; flex: none; display: flex; border-bottom: 3px solid #d9d8d7; padding-bottom: 2px; }
.group { border-right: 1px solid #c8c6c4; display: flex; flex-direction: column; height: 110px; }
.items { display: flex; height: 95px; padding-top: 3px; }
.glabel { text-align: center; font-size: 12.500px; line-height: 16px; }
.cmd { display: flex; flex-direction: column; align-items: center; text-align: center; white-space: nowrap; font-size: 14.500px; }
.cmd > span { margin-top: 3px; display: block; }
.nudge { margin-left: 6px; } .nudge1 { margin-left: 3px; } .nudge2 { margin-left: 10px; } .nudge-l { margin-right: 5px; }
.dim, .clip-list { color: #a8a6a4; }
.mini { display: inline-block; margin-left: 2px; vertical-align: 1px; }
.g-clip { width: 201px; } .g-data { width: 427px; } .g-query { width: 146px; } .g-insert { width: 184px; }
.g-calc { width: 144px; } .g-sens { width: 101px; } .g-share { width: 74px; }
.g-data .items { padding-left: 10px; } .g-query .items { padding-left: 11px; } .g-insert .items { padding-left: 15px; } .g-calc .items { padding-left: 11px; }
.w-paste { width: 60px; padding-left: 10px; } .w-get, .w-excel { width: 50px; } .w-pbi { width: 62px; } .w-sql { width: 58px; } .w-enter { width: 42px; } .w-dv { width: 80px; } .w-recent { width: 58px; }
.w-trans { width: 70px; } .w-refresh { width: 54px; } .w-nv { width: 40px; } .w-text { width: 60px; } .w-more { width: 54px; }
.w-nm { width: 60px; } .w-qm { width: 62px; } .w-sens { width: 100px; } .w-pub { width: 73px; }
.clip-list { display: flex; flex-direction: column; gap: 10px; padding: 2px 0 0 5px; font-size: 14.800px; }
.clip-list div { display: flex; gap: 5px; white-space: nowrap; }
.collapse { margin: 97px 6px 0 auto; }

.workspace { height: 787px; flex: none; display: flex; }
.rail { width: 51px; border-right: 1px solid #dcdbda; }
.rail-item { height: 50px; display: flex; align-items: center; justify-content: center; border-left: 3px solid transparent; padding: 0 2px 3px 0; }
.rail-item.on { border-color: #f2c811; }
.center { width: 1417px; }
.stage { height: 743px; display: flex; background: #32394c; }
.canvas-area { width: 1375px; padding: 3px 0 0 56px; }
.report { position: relative; width: 1264px; height: 737px; background:
  repeating-linear-gradient(90deg, #fff 0 2px, transparent 2px 4px) 0 0/100% 2px no-repeat,
  repeating-linear-gradient(90deg, #fff 0 2px, transparent 2px 4px) 0 100%/100% 2px no-repeat,
  repeating-linear-gradient(#fff 0 2px, transparent 2px 4px) 0 0/2px 100% no-repeat,
  repeating-linear-gradient(#fff 0 2px, transparent 2px 4px) 100% 0/2px 100% no-repeat;
  color: #fff; font-family: "Liberation Sans", Arial, sans-serif; letter-spacing: 0; }
.report text { fill: #fff; }

/* visuals pinned on the report canvas */
.prev { position: absolute; left: 7px; top: 32px; display: flex; align-items: center; gap: 10px; }
.black { font-family: Inter, "Liberation Sans", sans-serif; font-weight: 900; }
.report .prev-t { fill: #38f8b8; font-size: 15px; }
.report .red { fill: #d94c57; font-size: 17px; }
.slicer { position: absolute; left: 2px; font-size: 12px; line-height: 17.730px; letter-spacing: -.08px; }
.boxed { border: 1px solid #a3a7b2; }
.s1 { top: 109px; width: 214px; height: 172px; padding: 5px 13px 0 12px; }
.s2 { top: 287px; width: 213px; padding: 6px 11px 0 12px; }
.s3 { top: 437px; width: 203px; height: 287px; padding: 4px 11px 0 12px; }
.s-head { display: flex; justify-content: space-between; align-items: center; font-size: 13.330px; height: 17px; margin-bottom: 3px; padding-left: 1px; letter-spacing: -.15px; }
.slicer li { display: flex; align-items: center; gap: 7px; white-space: nowrap; }
.slicer li::before, .month li::before { content: ""; width: 13px; height: 13px; border: 1px solid #b9b9bb; flex: none; }
.slicer li.on::before { background: #222; border-color: #222; }
.card { position: absolute; left: 233px; top: 91px; width: 166px; text-align: center; }
.big { font-size: 36px; line-height: 40px; letter-spacing: -.5px; }
.cap { font-size: 14.670px; line-height: 18px; margin-top: 2px; }
.month { position: absolute; left: 450px; top: 31px; width: 188px; }
.mo-head { background: #000; color: #64dcf0; width: 181px; height: 17px; display: flex; align-items: center; justify-content: space-between; padding-left: 1px; font-size: 13.330px; line-height: 16px; letter-spacing: -.1px; }
.mo-head svg { color: #fff; }
.mo-body { display: flex; justify-content: space-between; padding-top: 3px; }
.month li { display: flex; align-items: center; gap: 8px; height: 20px; font-size: 14.670px; padding-left: 0; letter-spacing: -.1px; }
.month li::before { width: 14px; height: 14px; }
.scroll { width: 8px; height: 103px; background: #7a7b80; }
.viz { position: absolute; }
.bars { left: 233px; top: 244px; }
.funnel { left: 693px; top: 24px; }
.line { left: 693px; top: 424px; }
.legend { font-size: 12.500px; }
.b { font-weight: bold; }
.tick { font-size: 12px; }
.mid, .num { text-anchor: middle; }
.num { font-size: 13px; }
.cat { font-size: 16px; }
.axis { font-size: 14.670px; }
.tilt { font-size: 16px; text-anchor: end; }

.filters { width: 42px; border-left: 1px solid #c8cad0; display: flex; flex-direction: column; align-items: center; color: #fff; }
.f-chev { margin: 20px 0 0 1px; }
.f-fun { margin: 43px 0 0 6px; }
.filters span { writing-mode: vertical-rl; font-weight: 700; font-size: 17px; margin-top: 14px; margin-right: 3px; letter-spacing: -.2px; }

.tabs { height: 44px; display: flex; border-bottom: 1px solid #dcdbda; white-space: nowrap; }
.t-nav { width: 50px; display: flex; gap: 22px; align-items: center; padding-left: 7px; border-right: 1px solid #b5b3b1; }
.tab { display: flex; align-items: center; border-right: 1px solid #c8c6c4; position: relative; letter-spacing: -.4px; }
.t1, .t2 { width: 95px; justify-content: center; }
.t3 { width: 95px; padding-left: 15px; gap: 5px; }
.t4 { width: 231px; justify-content: center; padding-right: 2px; }
.t5 { width: 213px; background: #fff; border-bottom: 5px solid #f2c811; padding: 5px 0 0 25px; }
.t6 { width: 104px; padding-left: 15px; gap: 5px; }
.tab svg { margin-top: 8px; }
.close { position: absolute; right: 5px; top: 2px; font-size: 14px; }
.plus { width: 48px; height: 40px; margin-top: 2px; background: #f2c811; display: flex; align-items: center; justify-content: center; }

.vis-pane { width: 227px; border-left: 1px solid #e4e3e2; border-right: 1px solid #dcdbda; }
.pane-head { display: flex; justify-content: space-between; padding: 18px 14px 0 15px; height: 60px; }
.pane-head svg { margin-top: 2px; color: #444; }
.vgrid { display: grid; grid-template-columns: repeat(6, 21px); column-gap: 14px; row-gap: 9px; padding: 4px 0 5px 7px; height: 181px; border-bottom: 1px solid #dcdbda; }
.vgrid svg { width: 21px; height: 21px; }
.w { fill: #fff; stroke: #605e5c; stroke-width: 1.200; }
.u { fill: #83beec; stroke: #1a73c0; stroke-width: 1.200; }
.g { fill: #c8c6c4; stroke: #7d7b79; stroke-width: 1.200; }
.n { fill: none; stroke: #3b3a39; stroke-width: 1.400; }
.bl { stroke: #1a73c0; }
.ax { fill: none; stroke: #3b3a39; stroke-width: 1.500; }
.i123 { font-size: 9.500px; fill: #1a86d0; text-anchor: middle; letter-spacing: 0; }
.ir { font-size: 18px; font-weight: 700; fill: #2288cc; text-anchor: middle; }
.well-tabs { display: flex; gap: 25px; padding: 10px 0 0 27px; height: 40px; }
.underline { width: 50px; height: 5px; border-radius: 3px; background: #f2c811; margin-left: 15px; }
.lbl-values { margin: 6px 0 0 15px; }
.drop { margin-left: 5px; width: 212px; background: #fff; border: 1px dashed #bab8b6; border-radius: 2px; letter-spacing: -.35px; }
.d1 { height: 35px; margin-top: 7px; padding: 6px 12px; }
.tt { margin: 18px 0 0 17px; }
.keep { margin: 17px 0 0 11px; }
.toggle { display: flex; align-items: center; margin: 16px 0 0 23px; }
.toggle span { width: 24px; }
.toggle i { width: 24px; height: 3px; border: 1px solid #605e5c; }
.toggle b { width: 15px; height: 15px; border-radius: 50%; background: #605e5c; margin-left: -1px; }
.d2 { height: 32px; margin-top: 18px; padding: 5px 10px; }

.fields-pane { width: 225px; }
.fields-pane .pane-head { padding-left: 16px; padding-right: 15px; }
.f-search { margin: 0 5px 7px; height: 33px; background: #fff; border: 1px solid #605e5c; border-radius: 2px; display: flex; align-items: center; gap: 7px; padding-left: 9px; font-size: 17px; color: #484644; }
.f-list { border-top: 1px solid #dcdbda; padding-top: 12px; color: #3b3a39; }
.f-list li { height: 30px; display: flex; align-items: center; padding-left: 12px; }
.f-list svg { margin-right: 7px; }
.f-list svg + svg { margin-left: -1px; }

.status { height: 30px; flex: none; display: flex; justify-content: space-between; align-items: center; padding: 0 7px 0 6px; color: #484644; letter-spacing: -.33px; }
.taskbar { height: 60px; flex: none; background: #cfe8ee; border-top: 1px solid #b8d5dc; display: flex; color: #222; }
.weather { width: 603px; display: flex; gap: 8px; padding: 9px 0 0 25px; }
.weather svg { margin-top: 8px; }
.sky { color: #555f63; }
.apps { display: flex; }
.app { width: 55px; height: 59px; display: flex; align-items: center; justify-content: center; position: relative; padding-bottom: 2px; }
.dot::after { content: ""; position: absolute; bottom: 5px; width: 8px; height: 5px; border-radius: 3px; background: #76858a; }
.active::before { content: ""; position: absolute; inset: 5px 4px 5px 4px; background: #e6f4f7; border: 1px solid #d9ecf0; border-radius: 5px; }
.active::after { content: ""; position: absolute; bottom: 5px; width: 21px; height: 4px; border-radius: 2px; background: #258292; }
.active svg { position: relative; }
.app em { position: absolute; left: 30px; top: 7px; width: 20px; height: 20px; border-radius: 50%; background: #258292; color: #fff; font-style: normal; font-size: 14px; line-height: 20px; text-align: center; }
.app em.r { background: #f00a0a; left: 28px; }
.tray { margin-left: auto; display: flex; align-items: center; padding: 0 25px 2px 0; letter-spacing: -.5px; }
.tray svg:nth-child(1) { margin-right: 17px; }
.lang { width: 46px; margin: 0 16px 0 14px; text-align: center; }
.tray svg:nth-child(4) { margin-right: 10px; }
.tray svg:nth-child(5) { margin-right: 10px; }
.clock { width: 90px; text-align: right; margin-right: 13px; letter-spacing: -.35px; }
```
